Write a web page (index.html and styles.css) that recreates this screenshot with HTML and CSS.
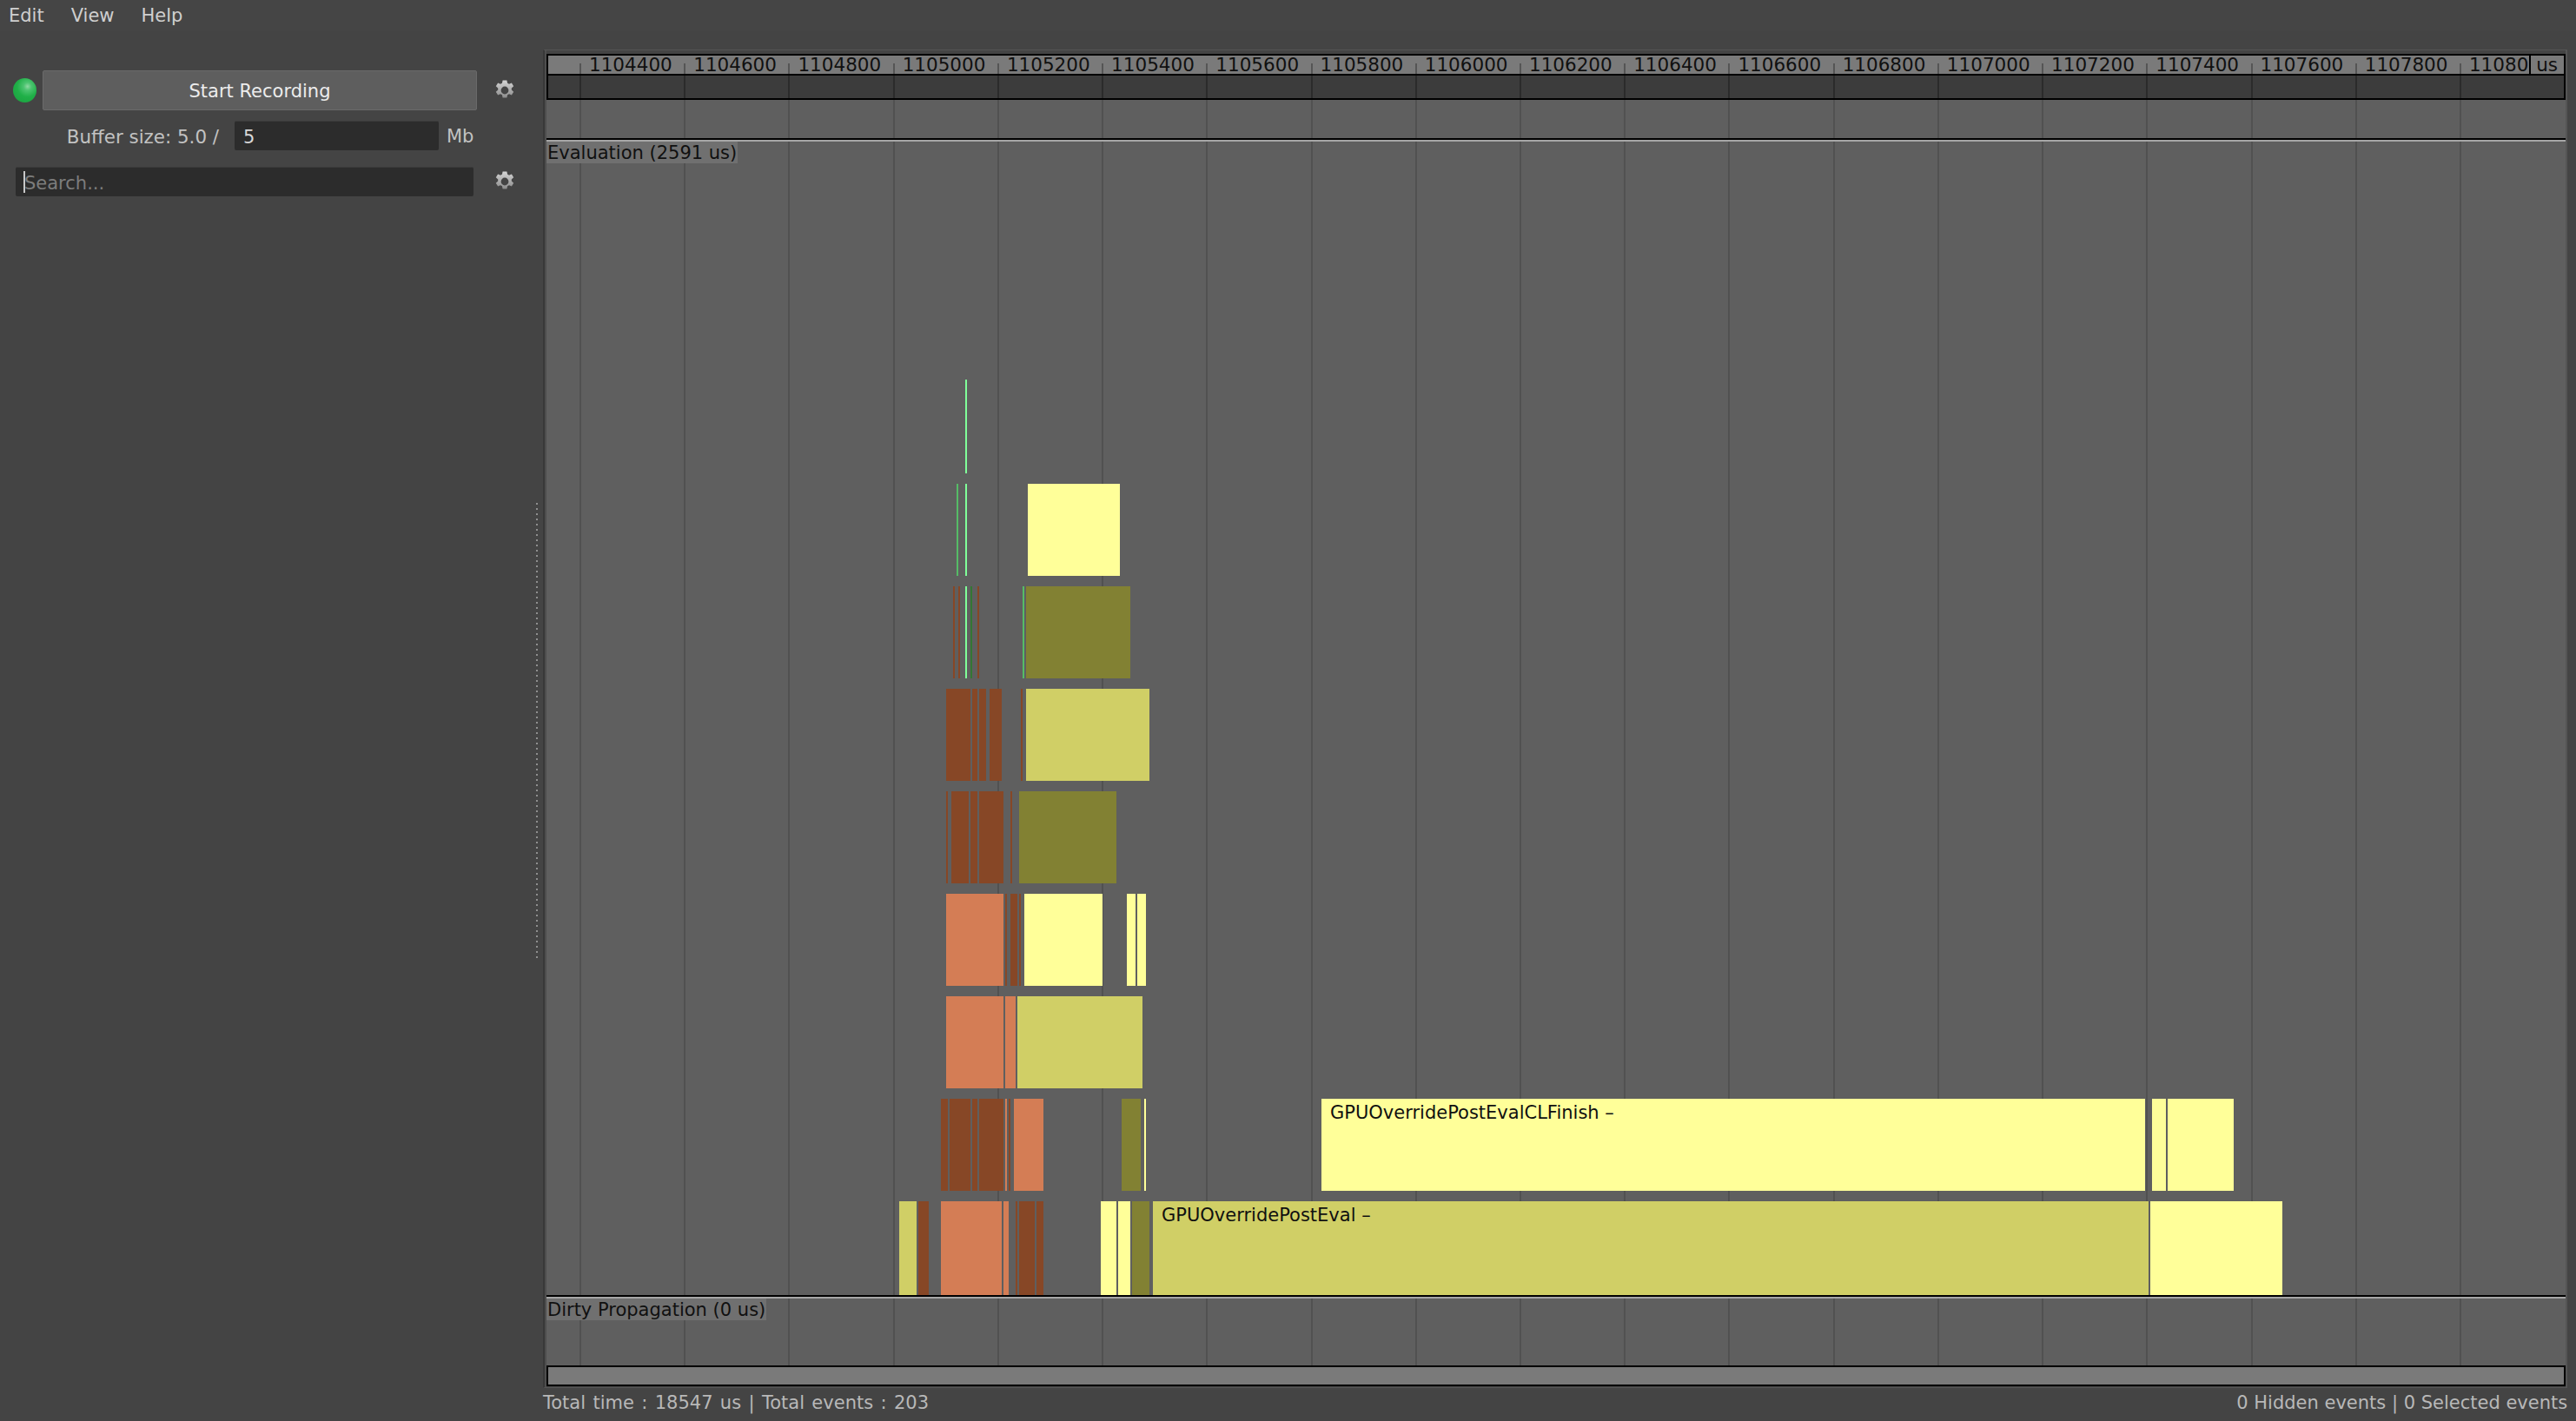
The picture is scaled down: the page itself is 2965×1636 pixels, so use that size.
FILE: index.html
```html
<!DOCTYPE html>
<html lang="en">
<head>
<meta charset="utf-8">
<title>Performance Monitor</title>
<link rel="stylesheet" href="styles.css">
</head>
<body>
<svg class="defs" width="0" height="0" aria-hidden="true">
  <defs>
    <linearGradient id="gearFill" x1="0" y1="0" x2="0" y2="1">
      <stop offset="0" stop-color="#d4d4d4"/>
      <stop offset="1" stop-color="#8c8c8c"/>
    </linearGradient>
    <symbol id="gear" viewBox="0 0 22 24">
      <g fill="url(#gearFill)">
        <path fill-rule="evenodd" d="M8.6 0.6h4.8l0.7 3.2 1.9 0.9 2.9-1.3 2.3 3.9-2.4 2.1v2.2l2.4 2.1-2.3 3.9-2.9-1.3-1.9 0.9-0.7 3.2H8.6l-0.7-3.2-1.9-0.9-2.9 1.3-2.3-3.9 2.4-2.1v-2.2L0.8 7.3l2.3-3.9 2.9 1.3 1.9-0.9zM11 7.6a4.4 4.4 0 1 0 0 8.8 4.4 4.4 0 0 0 0-8.8z"/>
      </g>
    </symbol>
  </defs>
</svg>

<header class="menubar">
  <span class="menu-item">Edit</span>
  <span class="menu-item">View</span>
  <span class="menu-item">Help</span>
</header>

<main class="main">
  <aside class="sidebar">
    <div class="side-row record-row">
      <span class="led"></span>
      <button class="record-btn" type="button">Start Recording</button>
      <svg class="gear record-gear"><use href="#gear"/></svg>
    </div>
    <div class="side-row buffer-row">
      <span class="buffer-label">Buffer size: 5.0 /</span>
      <input class="field buffer-input" type="text" value="5">
      <span class="buffer-unit">Mb</span>
    </div>
    <div class="side-row search-row">
      <div class="search-box">
        <span class="caret"></span>
        <input class="search-input" type="text" placeholder="Search...">
      </div>
      <svg class="gear search-gear"><use href="#gear"/></svg>
    </div>
  </aside>

  <div class="splitter"><span class="dots"></span></div>

  <section class="work">
    <div class="frame">
      <div class="ruler">
        <div class="scale">
          <span class="cell">1104400</span><span class="cell">1104600</span><span class="cell">1104800</span><span class="cell">1105000</span><span class="cell">1105200</span><span class="cell">1105400</span><span class="cell">1105600</span><span class="cell">1105800</span><span class="cell">1106000</span><span class="cell">1106200</span><span class="cell">1106400</span><span class="cell">1106600</span><span class="cell">1106800</span><span class="cell">1107000</span><span class="cell">1107200</span><span class="cell">1107400</span><span class="cell">1107600</span><span class="cell">1107800</span><span class="cell">1108000</span>
          <span class="unit">us</span>
        </div>
        <div class="band">
          <i></i><i></i><i></i><i></i><i></i><i></i><i></i><i></i><i></i><i></i><i></i><i></i><i></i><i></i><i></i><i></i><i></i><i></i><i></i>
        </div>
      </div>

      <div class="canvas">
        <div class="grid">
          <i></i><i></i><i></i><i></i><i></i><i></i><i></i><i></i><i></i><i></i><i></i><i></i><i></i><i></i><i></i><i></i><i></i><i></i><i></i>
        </div>

        <div class="track track-eval">
          <span class="track-label">Evaluation (2591 us)</span>
          <div class="lanes">
            <div class="lane lane-tall">
              <div class="ev ev-l" style="left:482px;width:2px"></div>
            </div>
            <div class="lane">
              <div class="ev ev-g" style="left:472px;width:2px"></div>
              <div class="ev ev-l" style="left:482px;width:2px"></div>
              <div class="ev ev-y" style="left:554px;width:106px"></div>
            </div>
            <div class="lane">
              <div class="ev ev-b" style="left:468px;width:2px"></div>
              <div class="ev ev-b" style="left:474px;width:2px"></div>
              <div class="ev ev-l" style="left:482px;width:2px"></div>
              <div class="ev ev-d" style="left:488px;width:2px"></div>
              <div class="ev ev-b" style="left:496px;width:2px"></div>
              <div class="ev ev-g" style="left:548px;width:2px"></div>
              <div class="ev ev-o" style="left:552px;width:120px"></div>
            </div>
            <div class="lane">
              <div class="ev ev-b" style="left:460px;width:28px"></div>
              <div class="ev ev-b" style="left:490px;width:6px"></div>
              <div class="ev ev-b" style="left:498px;width:8px"></div>
              <div class="ev ev-b" style="left:510px;width:14px"></div>
              <div class="ev ev-b" style="left:546px;width:2px"></div>
              <div class="ev ev-k" style="left:552px;width:142px"></div>
            </div>
            <div class="lane">
              <div class="ev ev-b" style="left:460px;width:2px"></div>
              <div class="ev ev-b" style="left:466px;width:20px"></div>
              <div class="ev ev-b" style="left:488px;width:8px"></div>
              <div class="ev ev-b" style="left:498px;width:28px"></div>
              <div class="ev ev-b" style="left:534px;width:2px"></div>
              <div class="ev ev-o" style="left:544px;width:112px"></div>
            </div>
            <div class="lane">
              <div class="ev ev-r" style="left:460px;width:66px"></div>
              <div class="ev ev-b" style="left:528px;width:2px"></div>
              <div class="ev ev-b" style="left:534px;width:8px"></div>
              <div class="ev ev-b" style="left:544px;width:2px"></div>
              <div class="ev ev-y" style="left:550px;width:90px"></div>
              <div class="ev ev-y" style="left:668px;width:10px"></div>
              <div class="ev ev-y" style="left:680px;width:10px"></div>
            </div>
            <div class="lane">
              <div class="ev ev-r" style="left:460px;width:66px"></div>
              <div class="ev ev-r" style="left:528px;width:12px"></div>
              <div class="ev ev-k" style="left:542px;width:144px"></div>
            </div>
            <div class="lane">
              <div class="ev ev-b" style="left:454px;width:8px"></div>
              <div class="ev ev-b" style="left:464px;width:24px"></div>
              <div class="ev ev-b" style="left:490px;width:6px"></div>
              <div class="ev ev-b" style="left:498px;width:28px"></div>
              <div class="ev ev-r" style="left:528px;width:2px"></div>
              <div class="ev ev-b" style="left:532px;width:2px"></div>
              <div class="ev ev-r" style="left:538px;width:34px"></div>
              <div class="ev ev-o" style="left:662px;width:22px"></div>
              <div class="ev ev-y" style="left:688px;width:2px"></div>
              <div class="ev ev-y ev-named" style="left:892px;width:948px">GPUOverridePostEvalCLFinish –</div>
              <div class="ev ev-y" style="left:1848px;width:16px"></div>
              <div class="ev ev-y" style="left:1866px;width:76px"></div>
            </div>
            <div class="lane lane-tall">
              <div class="ev ev-k" style="left:406px;width:20px"></div>
              <div class="ev ev-b" style="left:428px;width:12px"></div>
              <div class="ev ev-r" style="left:454px;width:70px"></div>
              <div class="ev ev-r" style="left:526px;width:6px"></div>
              <div class="ev ev-b" style="left:540px;width:2px"></div>
              <div class="ev ev-b" style="left:544px;width:18px"></div>
              <div class="ev ev-b" style="left:564px;width:8px"></div>
              <div class="ev ev-y" style="left:638px;width:18px"></div>
              <div class="ev ev-y" style="left:658px;width:14px"></div>
              <div class="ev ev-o" style="left:674px;width:20px"></div>
              <div class="ev ev-k ev-named" style="left:698px;width:1146px">GPUOverridePostEval –</div>
              <div class="ev ev-y" style="left:1846px;width:152px"></div>
            </div>
          </div>
        </div>

        <div class="track track-dirty">
          <span class="track-label">Dirty Propagation (0 us)</span>
        </div>
      </div>

      <div class="scrollbar"></div>
    </div>

    <footer class="status">
      <span class="status-total">Total time : 18547 us | Total events : 203</span>
      <span>0 Hidden events | 0 Selected events</span>
    </footer>
  </section>
</main>
</body>
</html>
```
FILE: styles.css
```css
* {
  box-sizing: border-box;
}

html,
body {
  margin: 0;
  height: 100%;
}

body {
  display: flex;
  flex-direction: column;
  width: 2965px;
  height: 1636px;
  overflow: hidden;
  background: #444444;
  color: #c4c4c4;
  font-family: "DejaVu Sans", sans-serif;
  font-size: 21px;
}

.defs {
  position: absolute;
}

/* menu bar */
.menubar {
  display: flex;
  flex: 0 0 36px;
  gap: 31px;
  padding: 6px 0 0 10px;
  background: #454545;
  line-height: 25px;
  color: #cfcfcf;
}

/* layout */
.main {
  display: flex;
  flex: 1 1 auto;
  min-height: 0;
}

.sidebar {
  display: flex;
  flex: 0 0 616px;
  flex-direction: column;
  padding-top: 45px;
}

.splitter {
  flex: 0 0 9px;
  padding: 543px 0 0 1px;
}

.dots {
  display: block;
  width: 2px;
  height: 524px;
  background: repeating-linear-gradient(to bottom, #8f8f8f 0 2px, transparent 2px 6px);
}

.side-row {
  display: flex;
  align-items: center;
}

/* recording row */
.record-row {
  height: 46px;
  padding-left: 15px;
}

.led {
  flex: 0 0 27px;
  height: 28px;
  border-radius: 50%;
  background: radial-gradient(circle at 62% 34%, #8fd8a2 0, #4cc470 18%, #20b048 48%, #1ca642 78%, #2e7d45 100%);
}

.record-btn {
  flex: 0 0 500px;
  height: 46px;
  margin-left: 7px;
  padding: 2px 0 0;
  border: 1px solid #6a6a6a;
  border-radius: 2px;
  background: #5e5e5e;
  color: #ececec;
  font: inherit;
}

.gear {
  flex: 0 0 22px;
  width: 22px;
  height: 24px;
}

.record-gear {
  margin-left: 21px;
}

/* buffer row */
.buffer-row {
  height: 34px;
  margin-top: 12px;
}

.buffer-label {
  flex: 0 0 252px;
  margin-top: 2px;
  text-align: right;
  color: #c2c2c2;
  font-size: 21.4px;
}

.field {
  height: 34px;
  border: 0;
  border-top: 1px solid #3c3c3c;
  border-radius: 2px;
  background: #2c2c2c;
  color: #d8d8d8;
  font: inherit;
  outline: none;
}

.buffer-input {
  flex: 0 0 235px;
  width: 235px;
  margin-left: 18px;
  padding: 2px 0 0 10px;
}

.buffer-unit {
  margin-left: 9px;
  margin-top: 2px;
  color: #c2c2c2;
}

/* search row */
.search-row {
  height: 34px;
  margin-top: 19px;
  padding-left: 18px;
}

.search-box {
  display: flex;
  flex: 0 0 527px;
  align-items: center;
  height: 34px;
  padding-left: 9px;
  border-top: 1px solid #3c3c3c;
  border-radius: 2px;
  background: #2c2c2c;
}

.caret {
  flex: 0 0 2px;
  height: 25px;
  background: #c8c8c8;
}

.search-input {
  flex: 1 1 auto;
  min-width: 0;
  margin-left: -1px;
  padding: 2px 0 0;
  border: 0;
  background: transparent;
  color: #d8d8d8;
  font: inherit;
  outline: none;
}

.search-input::placeholder {
  color: #7c7c7c;
  opacity: 1;
}

.search-gear {
  margin-left: 25px;
}

/* timeline frame */
.work {
  display: flex;
  flex: 0 0 2328px;
  flex-direction: column;
  margin-top: 21px;
}

.frame {
  display: flex;
  flex: 0 0 1541px;
  flex-direction: column;
  padding: 4px 0 1px 2px;
  border: 1px solid #555555;
  border-width: 1px 2px 1px 2px;
  border-left-color: #383838;
  background: linear-gradient(to right, #4e4e4e 0 2px, transparent 2px);
}

/* ruler */
.ruler {
  flex: 0 0 53px;
  border: 2px solid #000000;
  background: #000000;
}

.scale {
  position: relative;
  display: flex;
  height: 21px;
  padding-left: 36px;
  background: #7a7a7a;
  color: #101010;
  font-size: 21.5px;
  line-height: 21px;
}

.cell {
  position: relative;
  flex: 0 0 120.22px;
  padding-left: 11px;
  white-space: nowrap;
}

.cell::before {
  content: "";
  position: absolute;
  top: 9px;
  left: 0;
  width: 2px;
  height: 12px;
  background: #555555;
}

.unit {
  position: absolute;
  top: 0;
  right: 0;
  width: 40px;
  height: 21px;
  padding-left: 6px;
  border-left: 2px solid #000000;
  background: #7a7a7a;
}

.band {
  display: flex;
  height: 26px;
  margin-top: 2px;
  padding-left: 36px;
  overflow: hidden;
  background: #3c3c3c;
}

.band i,
.grid i {
  flex: 0 0 120.22px;
  border-left: 2px solid #2b2b2b;
}

/* canvas with grid lines */
.canvas {
  position: relative;
  display: flex;
  flex: 1 1 auto;
  flex-direction: column;
  justify-content: flex-end;
  min-height: 0;
  background: #5f5f5f;
}

.grid {
  position: absolute;
  inset: 0;
  display: flex;
  padding-left: 38px;
  overflow: hidden;
}

.grid i {
  border-left-color: #515151;
}

.track {
  position: relative;
  padding-top: 2px;
  border-top: 2px solid #000000;
  box-shadow: inset 0 2px 0 #a6a6a6;
}

.track-eval {
  display: flex;
  flex-direction: column;
  justify-content: space-between;
  height: 1332px;
}

.track-dirty {
  height: 81px;
}

.track-label {
  display: block;
  width: fit-content;
  padding: 2px 1px 0;
  background: #707070;
  color: #101010;
  line-height: 23px;
}

/* event lanes */
.lanes {
  display: flex;
  flex-direction: column;
  gap: 12px;
}

.lane {
  position: relative;
  height: 106px;
}

.lane-tall {
  height: 108px;
}

.ev {
  position: absolute;
  top: 0;
  bottom: 0;
}

.ev-named {
  padding: 4px 0 0 10px;
  overflow: hidden;
  color: #101010;
  line-height: 25px;
  white-space: nowrap;
}

.ev-y { background: #ffff99; }
.ev-k { background: #d0cf66; }
.ev-o { background: #828133; }
.ev-b { background: #874726; }
.ev-r { background: #d47d55; }
.ev-l { background: #80ff99; }
.ev-g { background: #55bb66; }
.ev-d { background: #337733; }

/* bottom scrollbar */
.scrollbar {
  flex: 0 0 24px;
  border: 2px solid #000000;
  background: #7a7a7a;
}

/* status bar */
.status {
  display: flex;
  flex: 1 1 auto;
  justify-content: space-between;
  padding-top: 5px;
  color: #b8b8b8;
  line-height: 25px;
}

.status-total {
  word-spacing: 1.7px;
}
```
